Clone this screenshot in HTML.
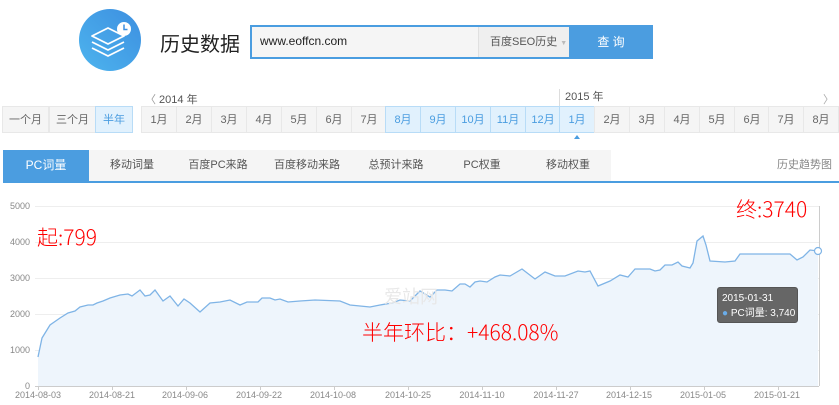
<!DOCTYPE html>
<html><head><meta charset="utf-8"><style>
*{margin:0;padding:0;box-sizing:border-box}
body{width:839px;height:405px;background:#fff;font-family:"Liberation Sans","Noto Sans CJK SC",sans-serif;position:relative;overflow:hidden;color:#555}
.a{position:absolute;white-space:nowrap}
.cell{position:absolute;top:106px;height:27px;line-height:26px;text-align:center;font-size:11px;color:#666;background:#f5f5f5;border:1px solid #e8e8e8}
.hl{background:#e1f1fd;border-color:#b8dcf7;color:#4a9de0}
.tab{position:absolute;top:150px;height:31px;line-height:31px;text-align:center;font-size:11px;color:#555;white-space:nowrap}
.yl{position:absolute;left:0;width:30px;text-align:right;font-size:9px;color:#888}
.xl{position:absolute;top:390px;font-size:9px;color:#888;width:70px;text-align:center}
.red{font-family:"Noto Sans CJK SC","Liberation Sans",sans-serif;font-weight:300;color:#f00;font-size:21px}
</style></head><body>
<svg class="a" style="left:79px;top:9px" width="62" height="62" viewBox="0 0 62 62">
<defs><linearGradient id="g" x1="0" y1="1" x2="1" y2="0"><stop offset="0" stop-color="#4db4ee"/><stop offset="1" stop-color="#3d8fe0"/></linearGradient></defs>
<circle cx="31" cy="31" r="31" fill="url(#g)"/>
<g fill="none" stroke="#fff" stroke-width="1.8" stroke-linejoin="round">
<path d="M13 27 L29 19 L45 27 L29 35 Z"/>
<path d="M13 33 L29 41 L45 33"/>
<path d="M13 39 L29 47 L45 39"/>
</g>
<circle cx="45" cy="20" r="7" fill="#fff"/>
<path d="M45 15.5 V20.5 H48.5" stroke="#3d8fe0" stroke-width="1.5" fill="none"/>
</svg>
<div class="a" style="left:160px;top:28px;font-size:20px;color:#222">历史数据</div>
<div class="a" style="left:250px;top:25px;width:403px;height:34px;border:2px solid #4a9de0;background:#f5f5f5"></div>
<div class="a" style="left:260px;top:34px;font-size:12px;color:#222">www.eoffcn.com</div>
<div class="a" style="left:478px;top:27px;width:91px;height:30px;background:#efefef;border-left:1px solid #e0e0e0;font-size:11px;line-height:30px;padding-left:11px;color:#555">百度SEO历史<span style="color:#bbb;font-size:7px;margin-left:3px">▼</span></div>
<div class="a" style="left:569px;top:25px;width:84px;height:34px;background:#4b9de0;color:#fff;font-size:12px;line-height:34px;text-align:center">查 询</div>

<div class="a" style="left:145px;top:91px;font-size:11px;color:#555"><span style="color:#999">〈</span> 2014 年</div>
<div class="a" style="left:559px;top:89px;height:17px;border-left:1px solid #ddd;padding-left:5px;font-size:11px;color:#555;line-height:17px">2015 年</div>
<div class="a" style="left:823px;top:91px;font-size:11px;color:#aaa">〉</div>
<div class="cell" style="left:2px;width:47px">一个月</div>
<div class="cell" style="left:49px;width:47px">三个月</div>
<div class="cell hl" style="left:95px;width:38px">半年</div>
<div class="cell" style="left:141px;width:36px">1月</div>
<div class="cell" style="left:176px;width:36px">2月</div>
<div class="cell" style="left:211px;width:36px">3月</div>
<div class="cell" style="left:246px;width:36px">4月</div>
<div class="cell" style="left:281px;width:36px">5月</div>
<div class="cell" style="left:316px;width:36px">6月</div>
<div class="cell" style="left:351px;width:36px">7月</div>
<div class="cell hl" style="left:385px;width:36px">8月</div>
<div class="cell hl" style="left:420px;width:36px">9月</div>
<div class="cell hl" style="left:455px;width:36px">10月</div>
<div class="cell hl" style="left:490px;width:36px">11月</div>
<div class="cell hl" style="left:525px;width:36px">12月</div>
<div class="cell hl" style="left:559px;width:36px">1月</div>
<div class="cell" style="left:594px;width:36px">2月</div>
<div class="cell" style="left:629px;width:36px">3月</div>
<div class="cell" style="left:664px;width:36px">4月</div>
<div class="cell" style="left:699px;width:36px">5月</div>
<div class="cell" style="left:734px;width:36px">6月</div>
<div class="cell" style="left:768px;width:36px">7月</div>
<div class="cell" style="left:803px;width:36px">8月</div>
<div class="a" style="left:574px;top:135px;width:0;height:0;border:3px solid transparent;border-bottom:4px solid #4a9de0;border-top:0"></div>

<div class="a" style="left:3px;top:150px;width:608px;height:31px;background:#f5f5f5"></div>
<div class="tab" style="left:3px;width:86px;background:#4b9de0;color:#fff;font-size:12px">PC词量</div>
<div class="tab" style="left:89px;width:86px">移动词量</div>
<div class="tab" style="left:175px;width:86px">百度PC来路</div>
<div class="tab" style="left:261px;width:92px">百度移动来路</div>
<div class="tab" style="left:353px;width:86px">总预计来路</div>
<div class="tab" style="left:439px;width:86px">PC权重</div>
<div class="tab" style="left:525px;width:86px">移动权重</div>
<div class="tab" style="left:770px;width:69px;color:#888">历史趋势图</div>
<div class="a" style="left:3px;top:181px;width:836px;height:2px;background:#4a9de0"></div>

<div class="yl" style="top:201px">5000</div>
<div class="yl" style="top:237px">4000</div>
<div class="yl" style="top:273px">3000</div>
<div class="yl" style="top:309px">2000</div>
<div class="yl" style="top:345px">1000</div>
<div class="yl" style="top:381px">0</div>
<svg class="a" style="left:0;top:0" width="839" height="405">
<g stroke="#eee" stroke-width="1"><line x1="35" y1="206.5" x2="819" y2="206.5"/><line x1="35" y1="242.5" x2="819" y2="242.5"/><line x1="35" y1="278.5" x2="819" y2="278.5"/><line x1="35" y1="314.5" x2="819" y2="314.5"/><line x1="35" y1="350.5" x2="819" y2="350.5"/></g>
<line x1="819.5" y1="206" x2="819.5" y2="386" stroke="#ccc"/>
<line x1="35" y1="386.5" x2="819" y2="386.5" stroke="#ccc"/>
<g stroke="#ccc"><line x1="38.5" y1="386" x2="38.5" y2="390"/><line x1="112.5" y1="386" x2="112.5" y2="390"/><line x1="186.5" y1="386" x2="186.5" y2="390"/><line x1="260.5" y1="386" x2="260.5" y2="390"/><line x1="334.5" y1="386" x2="334.5" y2="390"/><line x1="408.5" y1="386" x2="408.5" y2="390"/><line x1="482.5" y1="386" x2="482.5" y2="390"/><line x1="556.5" y1="386" x2="556.5" y2="390"/><line x1="630.5" y1="386" x2="630.5" y2="390"/><line x1="704.5" y1="386" x2="704.5" y2="390"/><line x1="778.5" y1="386" x2="778.5" y2="390"/></g>
<path fill="#eef5fc" d="M38 357 L42 338 L50 325 L60 318 L68 313 L75 311 L80 307 L88 305 L93 305 L97 303 L103 301 L110 298 L120 295 L128 294 L132 296 L136 293 L140 290 L145 296 L150 295 L155 290 L163 301 L170 296 L178 306 L184 299 L190 303 L200 312 L210 303 L220 302 L230 300 L240 305 L247 302 L258 302 L262 298 L270 298 L275 300 L280 299 L288 302 L300 301 L315 300 L340 301 L350 305 L360 306 L370 307 L380 305 L392 303 L400 300 L410 301 L420 291 L430 297 L437 290 L445 290 L452 291 L460 284 L465 284 L470 287 L475 282 L480 281 L487 282 L495 277 L500 275 L510 276 L522 269 L535 279 L545 272 L555 276 L565 276 L578 271 L585 272 L590 271 L598 286 L610 281 L620 275 L628 277 L635 269 L650 269 L655 271 L660 270 L665 265 L672 265 L678 262 L682 266 L690 268 L693 263 L697 241 L703 236 L706 245 L710 261 L725 262 L735 261 L740 254 L760 254 L790 254 L797 260 L803 257 L810 250 L818 251 L818 386 L38 386 Z"/>
<path fill="none" stroke="#7fb4e6" stroke-width="1.3" d="M38 357 L42 338 L50 325 L60 318 L68 313 L75 311 L80 307 L88 305 L93 305 L97 303 L103 301 L110 298 L120 295 L128 294 L132 296 L136 293 L140 290 L145 296 L150 295 L155 290 L163 301 L170 296 L178 306 L184 299 L190 303 L200 312 L210 303 L220 302 L230 300 L240 305 L247 302 L258 302 L262 298 L270 298 L275 300 L280 299 L288 302 L300 301 L315 300 L340 301 L350 305 L360 306 L370 307 L380 305 L392 303 L400 300 L410 301 L420 291 L430 297 L437 290 L445 290 L452 291 L460 284 L465 284 L470 287 L475 282 L480 281 L487 282 L495 277 L500 275 L510 276 L522 269 L535 279 L545 272 L555 276 L565 276 L578 271 L585 272 L590 271 L598 286 L610 281 L620 275 L628 277 L635 269 L650 269 L655 271 L660 270 L665 265 L672 265 L678 262 L682 266 L690 268 L693 263 L697 241 L703 236 L706 245 L710 261 L725 262 L735 261 L740 254 L760 254 L790 254 L797 260 L803 257 L810 250 L818 251"/>
<circle cx="818" cy="251" r="3.5" fill="#fff" stroke="#7fb4e6" stroke-width="1.2"/>
</svg>
<div class="a" style="left:384px;top:283px;font-size:18px;color:#e8e8e8">爱站网</div>
<div class="xl" style="left:3px">2014-08-03</div>
<div class="xl" style="left:77px">2014-08-21</div>
<div class="xl" style="left:150px">2014-09-06</div>
<div class="xl" style="left:224px">2014-09-22</div>
<div class="xl" style="left:298px">2014-10-08</div>
<div class="xl" style="left:373px">2014-10-25</div>
<div class="xl" style="left:447px">2014-11-10</div>
<div class="xl" style="left:521px">2014-11-27</div>
<div class="xl" style="left:594px">2014-12-15</div>
<div class="xl" style="left:668px">2015-01-05</div>
<div class="xl" style="left:742px">2015-01-21</div>
<div class="a red" style="left:37px;top:222px">起:799</div>
<div class="a red" style="left:736px;top:194px">终:3740</div>
<div class="a red" style="left:362px;top:317px">半年环比：+468.08%</div>
<div class="a" style="left:717px;top:287px;width:81px;height:36px;background:#666;border:1px solid #555;border-radius:3px;color:#fff;font-size:10px;padding:3px 4px;line-height:15px;white-space:nowrap">2015-01-31<br><span style="color:#6aace8">●</span> PC词量: 3,740</div>
</body></html>
